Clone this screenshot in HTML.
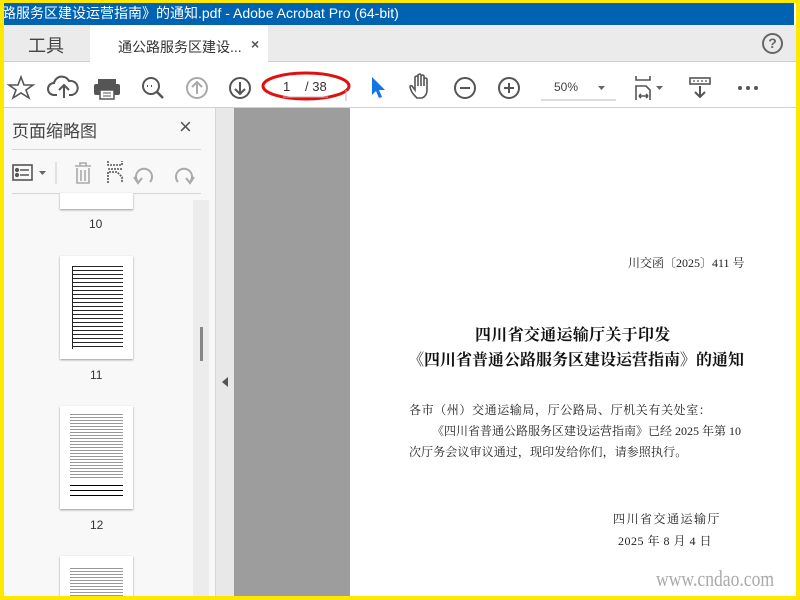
<!DOCTYPE html>
<html><head><meta charset="utf-8"><style>
*{margin:0;padding:0;box-sizing:border-box}
body{width:800px;height:600px;overflow:hidden;background:#ffe800;font-family:"Liberation Sans","Noto Sans CJK SC",sans-serif;position:relative}
.a{position:absolute}
.serif{font-family:"Liberation Serif","Noto Serif CJK SC",serif}
</style></head><body>
<div class="a" style="left:4px;top:3px;width:792px;height:593px;background:#fff;overflow:hidden">
 <div class="a" style="left:0;top:0;width:792px;height:22px;background:#0063b1;color:#fff;font-size:14px;line-height:21px;white-space:nowrap;left:-2px">路服务区建设运营指南》的通知.pdf - Adobe Acrobat Pro (64-bit)</div>
 <div class="a" style="left:0;top:22px;width:792px;height:37px;background:#ebebeb;border-bottom:1px solid #d0d0d0"></div>
 <div class="a" style="left:24px;top:29px;font-size:18px;color:#444">工具</div>
 <div class="a" style="left:86px;top:22px;width:178px;height:38px;background:#fff"></div>
 <div class="a" style="left:114px;top:34px;font-size:14px;color:#333">通公路服务区建设...</div>
 <div class="a" style="left:247px;top:33px;font-size:14px;color:#555;font-weight:bold">×</div>
 <div class="a" style="left:758px;top:30px;width:21px;height:21px;border:2px solid #666;border-radius:50%;font-size:14px;font-weight:bold;color:#666;text-align:center;line-height:17px">?</div>
 <div class="a" style="left:0;top:104px;width:792px;height:1px;background:#d0d0d0"></div>
 <svg class="a" style="left:0;top:62px" width="792" height="42" viewBox="0 0 792 42" fill="none" stroke="#555" stroke-width="2">
  <path d="M17 12 L20 20 L29 20 L22 25 L25 33 L17 28 L9 33 L12 25 L5 20 L14 20 Z" stroke-width="1.6"/>
  <path d="M53 30 h-3 a6 6 0 0 1 0-12 a8 8 0 0 1 15-2 a6 6 0 0 1 3 14 h-3 M60 33 v-12 M55 25 l5-5 5 5"/>
  <rect x="94" y="14" width="18" height="6" fill="#555" stroke="none"/><rect x="90" y="19" width="26" height="11" rx="2" fill="#555" stroke="none"/><rect x="96" y="25" width="14" height="9" fill="#fff" stroke="#555" stroke-width="1.5"/><path d="M99 28h8M99 31h8" stroke-width="1"/>
  <circle cx="147" cy="21" r="8"/><path d="M153 27 l6 6" stroke-width="2.5"/><path d="M143 21h1M147 21h1M151 21h0" stroke-width="2"/>
  <circle cx="193" cy="23" r="10" stroke="#aaa"/><path d="M193 29 v-11 M188 22 l5-5 5 5" stroke="#aaa"/>
  <circle cx="236" cy="23" r="10"/><path d="M236 17 v11 M231 24 l5 5 5-5"/>
  <ellipse cx="302" cy="21" rx="43" ry="13" stroke="#e01010" stroke-width="3"/>
  <path d="M279 32 h45 M342 25 v11" stroke="#bbb" stroke-width="1"/>
  <path d="M368 12 v18 l4-4 3 7 3-1-3-7 6 0 z" fill="#1473e6" stroke="none"/>
  <path d="M411 31 q-4-4-5-9 q0-2 2-1 l3 4 v-13 q2-2 3 0 v9 v-11 q2-2 3 0 v11 v-10 q2-2 3 0 v10 v-7 q2-2 3 0 v11 q0 6-5 8 h-5 z" stroke-width="1.6"/>
  <circle cx="461" cy="23" r="10"/><path d="M456 23h10"/>
  <circle cx="505" cy="23" r="10"/><path d="M500 23h10M505 18v10"/>
  <path d="M537 35 h75" stroke="#bbb" stroke-width="1"/>
  <path d="M594 21 l3.5 4 3.5-4z" fill="#666" stroke="none"/>
  <path d="M632 11 v4 h14 v-4 M632 35 v-14 h10 l4 4 v10 M635 31h9 M635 31l2-2M635 31l2 2M644 31l-2-2M644 31l-2 2" stroke-width="1.6"/>
  <path d="M652 21 l3.5 4 3.5-4z" fill="#666" stroke="none"/>
  <rect x="686" y="13" width="20" height="6" stroke-width="1.6"/><path d="M689 16h2M693 16h2M697 16h2M701 16h2" stroke-width="1.2"/><path d="M696 21v10M691 27l5 5 5-5"/>
  <circle cx="736" cy="23" r="2" fill="#555" stroke="none"/><circle cx="744" cy="23" r="2" fill="#555" stroke="none"/><circle cx="752" cy="23" r="2" fill="#555" stroke="none"/>
 </svg>
 <div class="a" style="left:279px;top:76px;font-size:13px;color:#333">1</div>
 <div class="a" style="left:301px;top:76px;font-size:13px;color:#333">/ 38</div>
 <div class="a" style="left:550px;top:77px;font-size:12px;color:#444">50%</div>
 <div class="a" style="left:0;top:105px;width:211px;height:488px;background:#f8f8f8"></div>
 <div class="a" style="left:8px;top:114px;font-size:17px;color:#444">页面缩略图</div>
 <div class="a" style="left:175px;top:111px;font-size:22px;color:#555">×</div>
 <div class="a" style="left:8px;top:146px;width:189px;height:1px;background:#d6d6d6"></div>
 <div class="a" style="left:8px;top:190px;width:189px;height:1px;background:#d6d6d6"></div>
 <svg class="a" style="left:0;top:150px" width="211" height="40" viewBox="0 0 211 40" fill="none" stroke="#555" stroke-width="1.6">
  <rect x="9" y="12" width="19" height="15"/><circle cx="13" cy="17" r="1.3" fill="#555"/><circle cx="13" cy="22" r="1.3" fill="#555"/><path d="M16 17h9M16 22h9"/>
  <path d="M35 18l3.5 4 3.5-4z" fill="#666" stroke="none"/>
  <path d="M52 9v22" stroke="#ccc" stroke-width="1"/>
  <g stroke="#aaa" stroke-width="2"><path d="M71 13h16M76 13v-3h6v3M73 15v15h12v-15M77 17v11M81 17v11" stroke-width="1.6"/>
  <path d="M134 29a8 8 0 1 1 12 0M130 24l4 6 4-5"/><path d="M186 29a8 8 0 1 0-12 0M190 24l-4 6-4-5"/></g>
  <path d="M104 8v4h14v-4M104 30v-11h9l5 5v6M104 16h14" stroke-dasharray="2 1"/>
 </svg>
 <div class="a" style="left:189px;top:197px;width:16px;height:396px;background:#ececec"></div>
 <div class="a" style="left:196px;top:324px;width:3px;height:34px;background:#888"></div>
 <div class="a" style="left:56px;top:190px;width:73px;height:16px;background:#fff;box-shadow:0 1px 2px #999"></div>
 <div class="a" style="left:85px;top:214px;font-size:12px;color:#333">10</div>
 <div class="a" style="left:56px;top:253px;width:73px;height:103px;background:#fff;box-shadow:0 1px 2px #999">
  <div style="position:absolute;left:12px;top:10px;width:51px;height:83px;background:repeating-linear-gradient(#000 0 1px,#fff 1px 4px);opacity:.85;border-left:1px solid #000"></div>
 </div>
 <div class="a" style="left:86px;top:365px;font-size:12px;color:#333">11</div>
 <div class="a" style="left:56px;top:403px;width:73px;height:103px;background:#fff;box-shadow:0 1px 2px #999">
  <div style="position:absolute;left:10px;top:8px;width:53px;height:65px;background:repeating-linear-gradient(#999 0 1px,#fff 1px 3px)"></div>
  <div style="position:absolute;left:10px;top:79px;width:53px;height:14px;background:repeating-linear-gradient(#000 0 1px,#fff 1px 5px)"></div>
 </div>
 <div class="a" style="left:86px;top:515px;font-size:12px;color:#333">12</div>
 <div class="a" style="left:56px;top:553px;width:73px;height:50px;background:#fff;box-shadow:0 1px 2px #999">
  <div style="position:absolute;left:10px;top:12px;width:53px;height:40px;background:repeating-linear-gradient(#999 0 1px,#fff 1px 3px)"></div>
 </div>
 <div class="a" style="left:211px;top:105px;width:1px;height:488px;background:#d6d6d6"></div>
 <div class="a" style="left:212px;top:105px;width:18px;height:488px;background:#e8e8e8"></div>
 <div class="a" style="left:218px;top:374px;width:0;height:0;border-top:5px solid transparent;border-bottom:5px solid transparent;border-right:6px solid #555"></div>
 <div class="a" style="left:230px;top:105px;width:116px;height:488px;background:#9d9d9d"></div>
 <div class="a" style="left:346px;top:105px;width:446px;height:488px;background:#fff"></div>
 <div class="a serif" style="left:624px;top:251px;font-size:12px;color:#222">川交函〔2025〕411 号</div>
 <div class="a serif" style="left:471px;top:319px;font-size:16px;font-weight:bold;color:#111;white-space:nowrap;letter-spacing:0.3px">四川省交通运输厅关于印发</div>
 <div class="a serif" style="left:404px;top:344px;font-size:16px;font-weight:bold;color:#111;white-space:nowrap">《四川省普通公路服务区建设运营指南》的通知</div>
 <div class="a serif" style="left:405px;top:398px;font-size:12px;color:#222;letter-spacing:0.6px;white-space:nowrap">各市（州）交通运输局，厅公路局、厅机关有关处室：</div>
 <div class="a serif" style="left:428px;top:419px;font-size:12px;color:#222;letter-spacing:0px;white-space:nowrap">《四川省普通公路服务区建设运营指南》已经 2025 年第 10</div>
 <div class="a serif" style="left:405px;top:440px;font-size:12px;color:#222;letter-spacing:0.1px;white-space:nowrap">次厅务会议审议通过，现印发给你们，请参照执行。</div>
 <div class="a serif" style="left:609px;top:507px;font-size:12px;color:#222;letter-spacing:1.5px">四川省交通运输厅</div>
 <div class="a serif" style="left:614px;top:529px;font-size:12px;color:#222;letter-spacing:0.5px">2025 年 8 月 4 日</div>
 <div class="a serif" style="left:652px;top:563px;font-size:22px;color:#aaa;transform:scaleX(.8);transform-origin:left">www.cndao.com</div>
</div>
</body></html>
